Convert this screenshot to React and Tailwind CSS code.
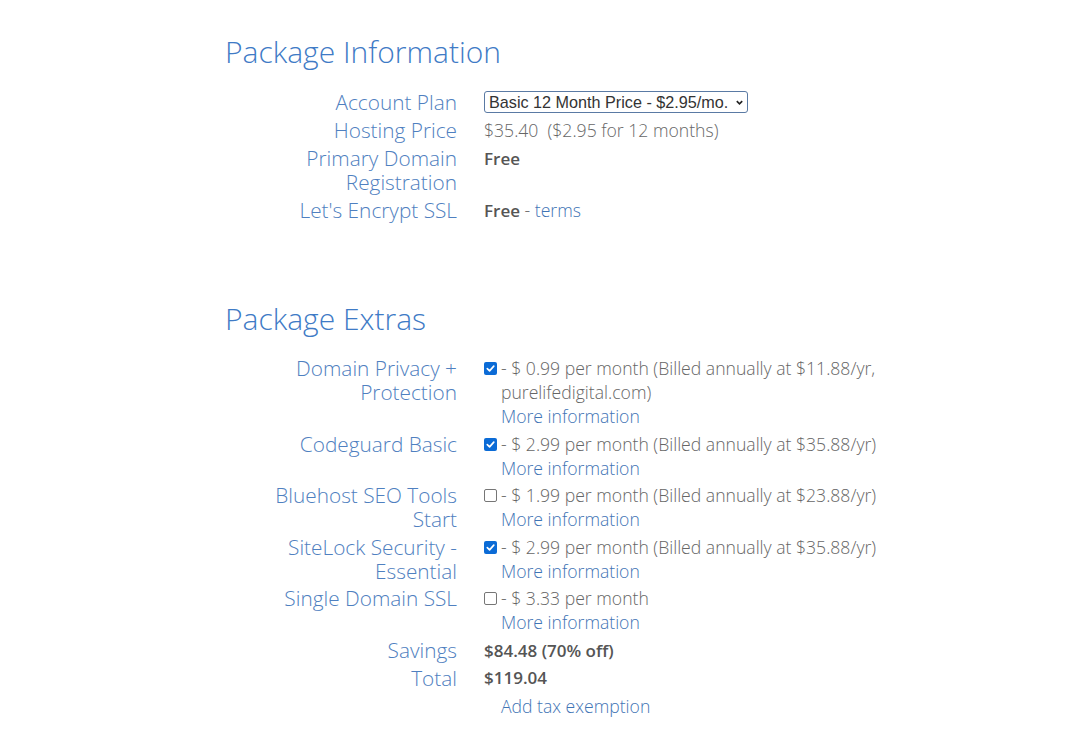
import React from "react";

const font = { fontFamily: '"Open Sans", sans-serif' };

function Row({ label, children }) {
  return (
    <div className="flex items-start">
      <div className="w-[231px] shrink-0 text-right text-[20.8px] leading-[24px] font-light text-[#4f80c0]">{label}</div>
      <div className="ml-[27px] text-[17.6px] leading-[24px] font-light text-[#666]">{children}</div>
    </div>
  );
}

function Check({ checked }) {
  return checked ? (
    <span className="mt-[6px] mr-[4px] inline-flex h-[13px] w-[13px] shrink-0 items-center justify-center rounded-[2px] bg-[#0b6bd6]">
      <svg viewBox="0 0 12 12" className="h-[11px] w-[11px]"><path d="M2.5 6.2 L5 8.6 L9.6 3.4" fill="none" stroke="#fff" strokeWidth="1.8" strokeLinecap="round" strokeLinejoin="round" /></svg>
    </span>
  ) : (
    <span className="mt-[6px] mr-[4px] inline-block h-[13px] w-[13px] shrink-0 rounded-[2px] border border-[#767676] bg-white" />
  );
}

function Extra({ label, checked, text }) {
  return (
    <Row label={label}>
      <div className="flex w-[400px]">
        <Check checked={checked} />
        <div>
          <div>{text}</div>
          <a className="text-[#3f74b5]">More information</a>
        </div>
      </div>
    </Row>
  );
}

const bold = "text-[17px] font-semibold text-[#555]";

export default function App() {
  return (
    <div className="min-h-[747px] bg-white pl-[226px] pt-[34px]" style={font}>
      <h2 className="-ml-[1px] text-[30px] leading-[36px] font-light text-[#3f7bc6]">Package Information</h2>
      <div className="mt-[20px] flex flex-col gap-[4px]">
        <Row label="Account Plan">
          <div className="flex h-[24px] items-center">
            <div className="flex h-[22px] w-[264px] items-center justify-between rounded-[3px] border border-[#5a7aa4] pl-[4px] pr-[3px] text-[16.2px] text-[#333]" style={{ fontFamily: '"Liberation Sans", Arial, sans-serif', fontWeight: 400 }}>
              <span>Basic 12 Month Price - $2.95/mo.</span>
              <svg viewBox="0 0 10 10" className="h-[9px] w-[9px]"><path d="M2 3.5 L5 6.5 L8 3.5" fill="none" stroke="#222" strokeWidth="1.8" /></svg>
            </div>
          </div>
        </Row>
        <Row label="Hosting Price">$35.40&nbsp; ($2.95 for 12 months)</Row>
        <Row label={<>Primary Domain<br />Registration</>}><span className={bold}>Free</span></Row>
        <Row label="Let's Encrypt SSL"><span className={bold}>Free</span> - <a className="text-[#3f74b5]">terms</a></Row>
      </div>

      <h2 className="-ml-[1px] mt-[78px] text-[30px] leading-[36px] font-light text-[#3f7bc6]">Package Extras</h2>
      <div className="mt-[19px] flex flex-col gap-[3.5px]">
        <Extra label={<>Domain Privacy +<br />Protection</>} checked text="- $ 0.99 per month (Billed annually at $11.88/yr, purelifedigital.com)" />
        <Extra label="Codeguard Basic" checked text="- $ 2.99 per month (Billed annually at $35.88/yr)" />
        <Extra label={<>Bluehost SEO Tools<br />Start</>} text="- $ 1.99 per month (Billed annually at $23.88/yr)" />
        <Extra label={<>SiteLock Security -<br />Essential</>} checked text="- $ 2.99 per month (Billed annually at $35.88/yr)" />
        <Extra label="Single Domain SSL" text="- $ 3.33 per month" />
        <Row label="Savings"><span className={bold}>$84.48 (70% off)</span></Row>
        <Row label="Total">
          <div className={bold}>$119.04</div>
          <a className="mt-[4px] block pl-[17px] text-[#3f74b5]">Add tax exemption</a>
        </Row>
      </div>
    </div>
  );
}
